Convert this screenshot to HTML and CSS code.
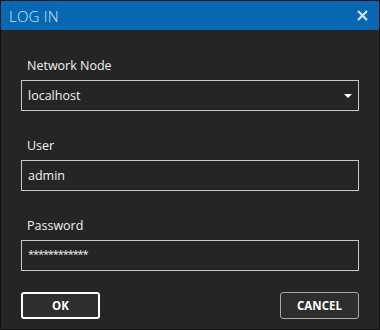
FILE: index.html
```html
<!DOCTYPE html>
<html lang="en">
<head>
    <meta charset="UTF-8">
    <title>Log In</title>
    <link rel="stylesheet" href="styles.css">
</head>
<body>

<div class="dialog">
    <!-- Title bar -->
    <div class="titlebar">
        <span class="title">LOG IN</span>
        <svg class="close" width="11" height="11" viewBox="0 0 11 11">
            <path d="M1 1 L10 10 M10 1 L1 10" stroke="#d3e6f7" stroke-width="2.2" fill="none"/>
        </svg>
    </div>

    <div class="content">
        <div class="field">
            <label>Network Node</label>
            <div class="box select">
                <span>localhost</span>
                <span class="arrow"></span>
            </div>
        </div>
        <div class="field">
            <label>User</label>
            <div class="box">admin</div>
        </div>
        <div class="field">
            <label>Password</label>
            <div class="box password">************</div>
        </div>

        <div class="buttons">
            <button class="btn ok">OK</button>
            <button class="btn cancel">CANCEL</button>
        </div>
    </div>
</div>

</body>
</html>
```

FILE: styles.css
```css
body {
    margin: 0;
    padding: 0;
    background-color: #111;
    font-family: "Open Sans", "Noto Sans", sans-serif;
}

.dialog {
    width: 380px;
    height: 330px;
    box-sizing: border-box;
    border: 1px solid #111;
    background-color: #252525;
}

.titlebar {
    height: 29px;
    background-color: #0667b3;
    display: flex;
    align-items: center;
    justify-content: space-between;
    padding: 0 11px 0 8px;
}

.title {
    color: #d8e9f7;
    font-size: 15px;
    font-weight: 300;
    letter-spacing: 0.2px;
}

.close {
    display: block;
}

.content {
    padding: 27px 20px 0 20px;
}

.field {
    margin-bottom: 26px;
}

.field label {
    display: block;
    height: 18px;
    line-height: 18px;
    font-size: 12.5px;
    color: #f2f2f2;
    padding-left: 6px;
    margin-bottom: 5px;
}

.box {
    height: 31px;
    box-sizing: border-box;
    border: 1px solid #c8c8c8;
    padding: 0 6px;
    display: flex;
    align-items: center;
    font-size: 12.5px;
    color: #f2f2f2;
}

.select {
    justify-content: space-between;
    padding-right: 6px;
}

.arrow {
    width: 0;
    height: 0;
    border-left: 4px solid transparent;
    border-right: 4px solid transparent;
    border-top: 4px solid #fff;
}

.password {
    font-size: 11px;
    letter-spacing: -1.1px;
    padding-bottom: 5px;
}

.buttons {
    display: flex;
    justify-content: space-between;
    margin-top: -5px;
}

.btn {
    width: 79px;
    height: 27px;
    background-color: #2e2e2e;
    color: #fff;
    font-family: "Open Sans", "Noto Sans", sans-serif;
    font-weight: 700;
    font-size: 11.5px;
    border-radius: 3px;
    cursor: pointer;
}

.ok {
    border: 2px solid #fff;
}

.cancel {
    border: 1px solid #a8a8a8;
}
```
